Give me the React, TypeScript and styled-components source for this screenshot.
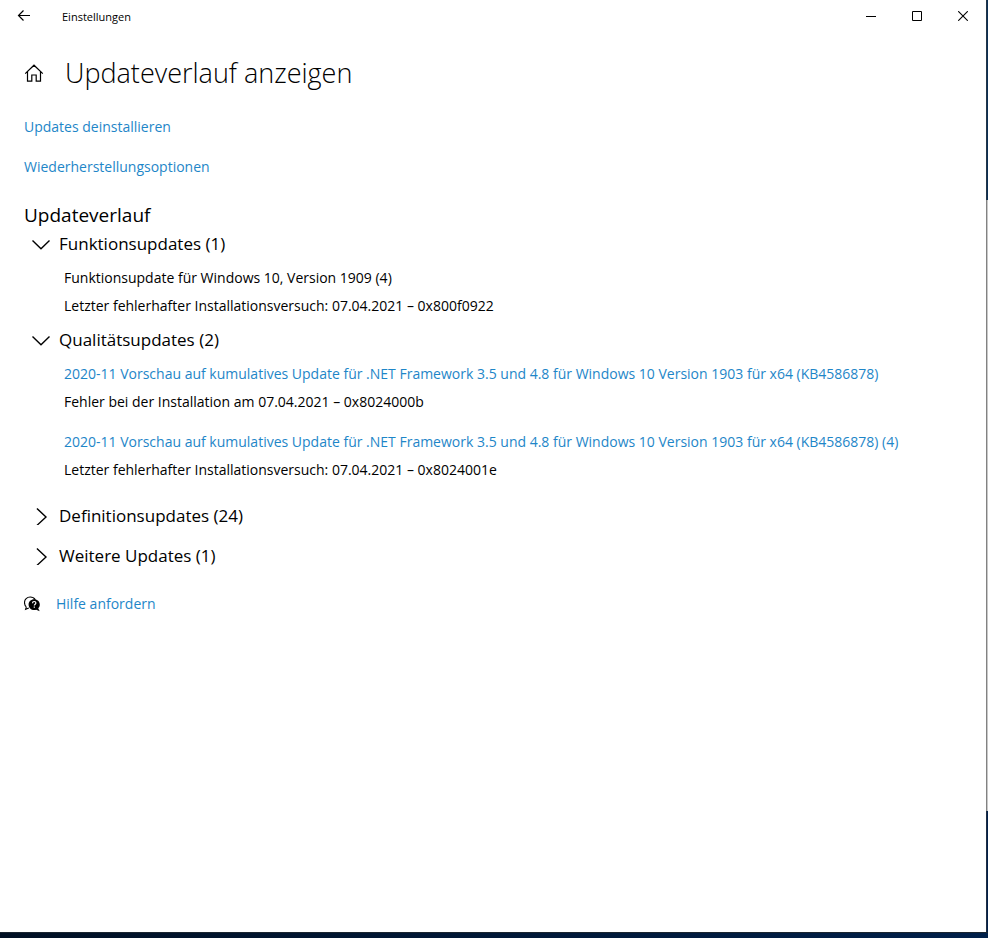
import React, { useState } from "react";
import styled, { createGlobalStyle } from "styled-components";

const GlobalStyle = createGlobalStyle`
  *, *::before, *::after { box-sizing: border-box; }
  body {
    margin: 0;
    background: #ffffff;
    color: #000000;
    font-family: "Open Sans", "Noto Sans", sans-serif;
    font-size: 14px;
    line-height: 20px;
  }
  h1, h2, h3, p, ul { margin: 0; padding: 0; font-weight: 400; }
  ul { list-style: none; }
  button { font: inherit; color: inherit; background: none; border: 0; padding: 0; margin: 0; }
`;

const Desktop = styled.div`
  display: grid;
  grid-template-columns: minmax(0, 1fr) 2px;
  grid-template-rows: minmax(0, 1fr) 6px;
  min-height: 100vh;
`;

const AppWindow = styled.div`
  display: flex;
  flex-direction: column;
  background: #ffffff;
`;

const SideEdge = styled.div`
  border-left: 1px solid rgba(60, 60, 60, 0.5);
  background: linear-gradient(#0c3055 0 200px, #c8c8c8 200px 811px, #02204a 811px);
`;

const BottomEdge = styled.div`
  grid-column: 1 / -1;
  border-top: 1px solid #1a2530;
  background: linear-gradient(90deg, #001024, #00204a);
`;

const TitleBar = styled.header`
  display: flex;
  align-items: center;
  height: 32px;
`;

const BackButton = styled.button`
  display: flex;
  align-items: center;
  justify-content: center;
  width: 48px;
  height: 32px;
`;

const WindowTitle = styled.span`
  flex: 1;
  padding: 2px 0 0 14px;
  font-size: 11px;
  line-height: 16px;
`;

const CaptionButton = styled.button`
  display: flex;
  align-items: center;
  justify-content: center;
  width: 46px;
  height: 32px;
`;

const Page = styled.main`
  display: flex;
  flex-direction: column;
  align-items: flex-start;
  padding: 20px 24px 24px;
`;

const PageHeader = styled.div`
  display: flex;
  align-items: center;
  gap: 21px;
  height: 41px;
`;

const HomeButton = styled.button`
  display: flex;
`;

const PageTitle = styled.h1`
  font-size: 27px;
  line-height: 40px;
  font-weight: 300;
`;

const Link = styled.a`
  color: #1e86c8;
  text-decoration: none;
`;

const Actions = styled.nav`
  display: flex;
  flex-direction: column;
  align-items: flex-start;
  gap: 20px;
  margin-top: 24px;
`;

const SectionTitle = styled.h2`
  margin-top: 23px;
  font-size: 19px;
  line-height: 30px;
`;

const Group = styled.section<{ $spaced: boolean }>`
  margin-top: ${(p) => (p.$spaced ? 12 : 0)}px;
  padding-left: 8px;
`;

const GroupToggle = styled.button`
  display: flex;
  align-items: center;
  gap: 9px;
  height: 28px;
  font-size: 17px;
  line-height: 28px;
`;

const Entries = styled.ul`
  display: flex;
  flex-direction: column;
  gap: 12px;
  padding: 6px 0 6px 32px;
`;

const Entry = styled.li`
  display: flex;
  flex-direction: column;
  align-items: flex-start;
  line-height: 28px;
`;

const HelpRow = styled.div`
  display: flex;
  align-items: center;
  gap: 16px;
  margin-top: 24px;
`;

const BackIcon = () => (
  <svg width="14" height="12" viewBox="0 0 14 12" fill="none" stroke="#000" strokeWidth="1.2" aria-hidden="true">
    <path d="M13 5.500H1.500M6.500.500l-5 5 5 5" />
  </svg>
);

const MinimizeIcon = () => (
  <svg width="10" height="10" viewBox="0 0 10 10" aria-hidden="true">
    <path d="M0 5.5H10" stroke="#000" />
  </svg>
);

const MaximizeIcon = () => (
  <svg width="10" height="10" viewBox="0 0 10 10" fill="none" aria-hidden="true">
    <path d="M.5.5h9v9h-9z" stroke="#000" />
  </svg>
);

const CloseIcon = () => (
  <svg width="10" height="10" viewBox="0 0 10 10" aria-hidden="true">
    <path d="M.2.2l9.6 9.6M9.8.2.2 9.8" stroke="#000" strokeWidth="1.1" />
  </svg>
);

const HomeIcon = () => (
  <svg width="20" height="20" viewBox="0 0 20 20" fill="none" stroke="#000" strokeWidth="1.2" aria-hidden="true">
    <path d="M1.2 10.6 10 2.200l8.800 8.400M3.500 8.700v9.500h4.300v-6.200h4.400v6.200h4.300V8.700" />
  </svg>
);

const Chevron = ({ open }: { open: boolean }) => (
  <svg width="18" height="18" viewBox="0 0 18 18" fill="none" stroke="#000" strokeWidth="1.4" aria-hidden="true">
    <path d={open ? "M.5 5.500 9 13.800l8.500-8.300" : "M4.900 1.400 14 9.900l-9.100 8.500"} />
  </svg>
);

const HelpIcon = () => (
  <svg width="16" height="16" viewBox="0 0 16 16" aria-hidden="true">
    <path
      d="M2.3 10.8C1 9.7.5 8.4.5 6.6.5 3.300 3 1 6.200 1c2.300 0 4 1 5 2.600M2.300 10.800 1.600 13.200l3.200-1.300"
      fill="none"
      stroke="#000"
      strokeWidth="1.1"
    />
    <path d="M10.200 3.200c3.200 0 5.600 2.300 5.600 5.200 0 1.700-.6 2.900-1.600 3.800l1.500 3-3.500-1.500c-.6.200-1.300.3-2 .3-3.200 0-5.600-2.500-5.600-5.600 0-2.900 2.400-5.200 5.600-5.200z" />
    <path d="M8.500 7.200c0-1.100.7-1.700 1.700-1.700s1.700.6 1.700 1.500c0 1.200-1.600 1.200-1.600 2.600" fill="none" stroke="#fff" strokeWidth="1.2" />
    <path d="M9.700 10.600h1.200v1.200H9.700z" fill="#fff" />
  </svg>
);

type Update = { title: string; status: string; linked?: boolean };
type UpdateGroup = { name: string; count: number; open?: boolean; updates: Update[] };

const groups: UpdateGroup[] = [
  {
    name: "Funktionsupdates",
    count: 1,
    open: true,
    updates: [
      {
        title: "Funktionsupdate für Windows 10, Version 1909 (4)",
        status: "Letzter fehlerhafter Installationsversuch: 07.04.2021 – 0x800f0922",
      },
    ],
  },
  {
    name: "Qualitätsupdates",
    count: 2,
    open: true,
    updates: [
      {
        title:
          "2020-11 Vorschau auf kumulatives Update für .NET Framework 3.5 und 4.8 für Windows 10 Version 1903 für x64 (KB4586878)",
        status: "Fehler bei der Installation am 07.04.2021 – 0x8024000b",
        linked: true,
      },
      {
        title:
          "2020-11 Vorschau auf kumulatives Update für .NET Framework 3.5 und 4.8 für Windows 10 Version 1903 für x64 (KB4586878) (4)",
        status: "Letzter fehlerhafter Installationsversuch: 07.04.2021 – 0x8024001e",
        linked: true,
      },
    ],
  },
  { name: "Definitionsupdates", count: 24, updates: [] },
  { name: "Weitere Updates", count: 1, updates: [] },
];

function HistoryGroup({ group }: { group: UpdateGroup }) {
  const [open, setOpen] = useState(Boolean(group.open));
  return (
    <Group $spaced={!open}>
      <h3>
        <GroupToggle type="button" aria-expanded={open} onClick={() => setOpen(!open)}>
          <Chevron open={open} />
          {`${group.name} (${group.count})`}
        </GroupToggle>
      </h3>
      {open && group.updates.length > 0 && (
        <Entries>
          {group.updates.map((u) => (
            <Entry key={u.title}>
              {u.linked ? <Link href="#kb4586878">{u.title}</Link> : <p>{u.title}</p>}
              <p>{u.status}</p>
            </Entry>
          ))}
        </Entries>
      )}
    </Group>
  );
}

export default function App() {
  return (
    <>
      <GlobalStyle />
      <Desktop>
        <AppWindow>
          <TitleBar>
            <BackButton type="button" aria-label="Zurück">
              <BackIcon />
            </BackButton>
            <WindowTitle>Einstellungen</WindowTitle>
            <CaptionButton type="button" aria-label="Minimieren">
              <MinimizeIcon />
            </CaptionButton>
            <CaptionButton type="button" aria-label="Maximieren">
              <MaximizeIcon />
            </CaptionButton>
            <CaptionButton type="button" aria-label="Schließen">
              <CloseIcon />
            </CaptionButton>
          </TitleBar>
          <Page>
            <PageHeader>
              <HomeButton type="button" aria-label="Startseite">
                <HomeIcon />
              </HomeButton>
              <PageTitle>Updateverlauf anzeigen</PageTitle>
            </PageHeader>
            <Actions>
              <Link href="#deinstallieren">Updates deinstallieren</Link>
              <Link href="#wiederherstellung">Wiederherstellungsoptionen</Link>
            </Actions>
            <SectionTitle>Updateverlauf</SectionTitle>
            {groups.map((g) => (
              <HistoryGroup key={g.name} group={g} />
            ))}
            <HelpRow>
              <HelpIcon />
              <Link href="#hilfe">Hilfe anfordern</Link>
            </HelpRow>
          </Page>
        </AppWindow>
        <SideEdge />
        <BottomEdge />
      </Desktop>
    </>
  );
}
